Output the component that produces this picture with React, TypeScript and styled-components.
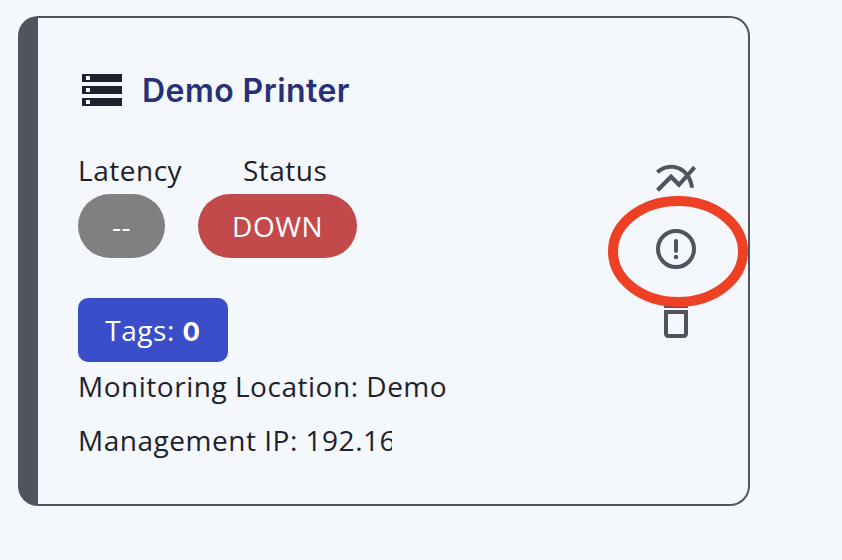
import React from "react";
import styled, { createGlobalStyle } from "styled-components";

const GlobalStyle = createGlobalStyle`
  *, *::before, *::after { box-sizing: border-box; }
  body {
    margin: 0;
    background: #f4f8fd;
    color: #1f212d;
    font-family: "Open Sans", sans-serif;
  }
  svg { display: block; }
`;

const Page = styled.main`
  width: 842px;
  height: 560px;
  padding: 16px 18px;
  overflow: hidden;
`;

const Card = styled.article`
  display: flex;
  justify-content: space-between;
  position: relative;
  width: 732px;
  height: 490px;
  padding-left: 40px;
  padding-right: 48px;
  border: 2px solid #51535f;
  border-left-width: 20px;
  border-radius: 20px;
`;

const Details = styled.div`
  display: flex;
  flex-direction: column;
  align-items: flex-start;
  padding-top: 48px;
  font-size: 28px;
  line-height: 38px;
  letter-spacing: 0.52px;
  white-space: nowrap;
`;

const Header = styled.header`
  display: flex;
  align-items: center;
  gap: 16px;
  height: 48px;
`;

const Title = styled.h2`
  margin: 0;
  padding-top: 2px;
  color: #283178;
  font: 600 32px/40px Inter, sans-serif;
  letter-spacing: 0.44px;
`;

const Metrics = styled.dl`
  display: flex;
  gap: 16px;
  margin: 37px 0 0;
`;

const Metric = styled.div<{ $center?: boolean }>`
  display: flex;
  flex-direction: column;
  align-items: ${(p) => (p.$center ? "center" : "flex-start")};
  & + & { width: 159px; }
`;

const Label = styled.dt<{ $indent?: number }>`
  height: 43px;
  padding-left: ${(p) => p.$indent ?? 0}px;
  line-height: 38px;
`;

const Pill = styled.dd<{ $color: string; $width: number }>`
  display: flex;
  align-items: center;
  justify-content: center;
  width: ${(p) => p.$width}px;
  height: 64px;
  margin: 0;
  border-radius: 32px;
  background: ${(p) => p.$color};
  color: #fff;
`;

const TagButton = styled.button`
  width: 150px;
  height: 64px;
  margin: 40px 0 5px;
  padding: 0;
  border: 0;
  border-radius: 10px;
  background: #3a4ec9;
  color: #fff;
  font: inherit;
  letter-spacing: inherit;
`;

const TagCount = styled.b`
  font: 700 26px/1 Inter, sans-serif;
`;

const InfoLine = styled.p<{ $clip?: number }>`
  width: ${(p) => (p.$clip ? `${p.$clip}px` : "auto")};
  margin: 0 0 16px;
  overflow: hidden;
`;

const Actions = styled.nav`
  display: flex;
  flex-direction: column;
  gap: 23px;
  padding-top: 136px;
`;

const IconButton = styled.button`
  width: 48px;
  height: 48px;
  padding: 0;
  border: 0;
  background: none;
  color: #51535f;
`;

const Highlight = styled.svg`
  position: absolute;
  top: 178px;
  left: 570px;
  pointer-events: none;
`;

const ServerIcon = () => (
  <svg width="48" height="48" viewBox="0 0 48 48" shapeRendering="crispEdges">
    {[8, 20, 32].map((y) => (
      <g key={y}>
        <rect x="4" y={y} width="40" height="8" fill="#1f212d" />
        <rect x="8" y={y + 2} width="4" height="4" fill="#f4f8fd" />
      </g>
    ))}
  </svg>
);

const ChartIcon = () => (
  <svg width="48" height="48" viewBox="0 -0.4 24 24" fill="currentColor">
    <path d="M22 6.92l-1.41-1.41-2.85 3.21C15.68 6.4 12.83 5 9.61 5 6.72 5 4.07 6.16 2 8l1.42 1.42C5.12 7.93 7.27 7 9.61 7c2.74 0 5.09 1.26 6.77 3.24l-2.88 3.24-4-4L2 16.99l1.5 1.5 6-6.01 4 4 4.05-4.55c.75 1.35 1.25 2.9 1.44 4.55H21c-.22-2.3-.95-4.39-2.04-6.14L22 6.92z" />
  </svg>
);

const AlertIcon = () => (
  <svg width="48" height="48" viewBox="0 0 24 24" fill="none" stroke="currentColor" strokeWidth="2">
    <circle cx="12" cy="12" r="9" />
    <path d="M12 8v5" strokeLinecap="round" />
    <circle cx="12" cy="16" r="1.1" fill="currentColor" stroke="none" />
  </svg>
);

const TrashIcon = () => (
  <svg width="48" height="48" viewBox="0 0 24 24" fill="currentColor">
    <path d="M6 4h12v2H6z" />
    <path fillRule="evenodd" d="M6 7h12v12c0 1.1-.9 2-2 2H8c-1.1 0-2-.9-2-2V7zm2 2v10h8V9H8z" />
  </svg>
);

export default function App() {
  return (
    <Page>
      <GlobalStyle />
      <Card>
        <Details>
          <Header>
            <ServerIcon />
            <Title>Demo Printer</Title>
          </Header>
          <Metrics>
            <Metric>
              <Label>Latency</Label>
              <Pill $color="#808080" $width={87}>--</Pill>
            </Metric>
            <Metric $center>
              <Label $indent={15}>Status</Label>
              <Pill $color="#c34a4b" $width={159}>DOWN</Pill>
            </Metric>
          </Metrics>
          <TagButton>Tags: <TagCount>0</TagCount></TagButton>
          <InfoLine>Monitoring Location: Demo</InfoLine>
          <InfoLine $clip={314}>Management IP: 192.16</InfoLine>
        </Details>
        <Actions>
          <IconButton aria-label="View chart"><ChartIcon /></IconButton>
          <IconButton aria-label="View alerts"><AlertIcon /></IconButton>
          <IconButton aria-label="Delete"><TrashIcon /></IconButton>
        </Actions>
        <Highlight width="140" height="111" viewBox="0 0 140 111">
          <ellipse cx="70" cy="55.5" rx="65" ry="50.5" fill="none" stroke="#ed4024" strokeWidth="10" />
        </Highlight>
      </Card>
    </Page>
  );
}
